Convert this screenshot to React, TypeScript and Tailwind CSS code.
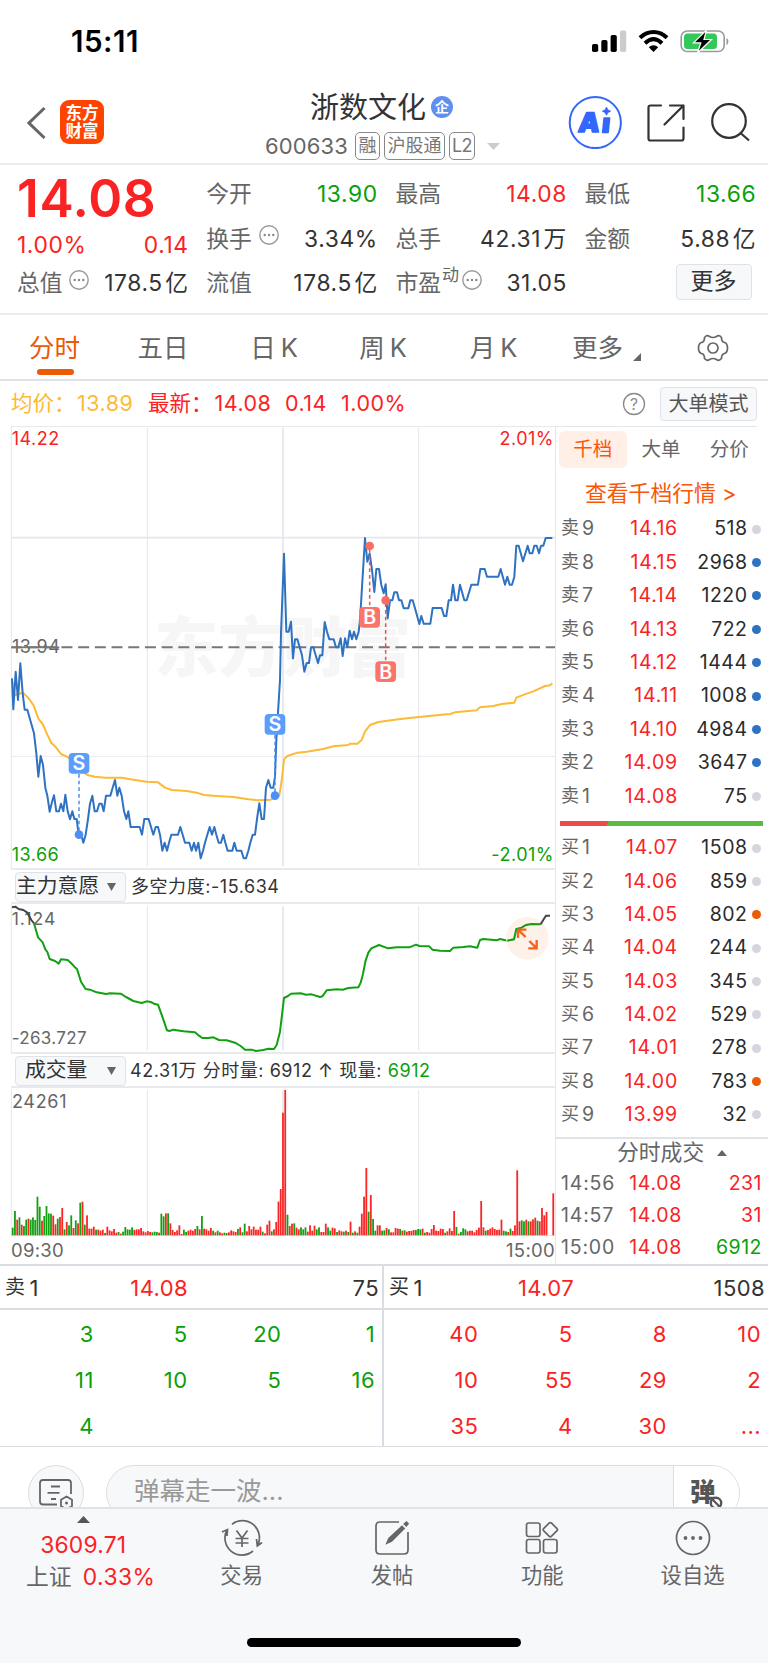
import React from "react";

const RED = "text-[#fa2323]";
const GREEN = "text-[#0aa00a]";
const DARK = "text-[#333]";

/* Chart geometry uses three units per CSS pixel. */
const pricePts =
  "36,775 40,868 47,755 54,840 61,730 68,820 74,869 82,869 102,940 109,1000 115,1070 122,1008 129,1035 136,1103 142,1127 149,1175 155,1150 162,1126 169,1174 177,1174 183,1151 190,1174 196,1124 203,1174 210,1198 217,1174 223,1197 230,1197 236,1244 244,1244 250,1268 257,1244 264,1197 270,1151 277,1127 284,1174 291,1174 298,1151 305,1151 311,1174 318,1127 331,1127 338,1103 345,1080 352,1127 358,1103 365,1127 372,1174 379,1197 385,1174 392,1221 419,1221 426,1244 433,1197 446,1197 453,1221 460,1244 467,1221 474,1221 480,1244 487,1292 494,1268 501,1292 507,1268 514,1244 534,1244 541,1221 548,1244 555,1268 568,1268 575,1292 582,1268 588,1292 595,1268 602,1315 609,1292 615,1268 622,1244 629,1221 636,1244 643,1221 649,1244 656,1268 663,1268 670,1244 676,1268 683,1292 697,1292 703,1268 710,1292 724,1292 731,1315 738,1315 745,1292 751,1268 758,1244 765,1244 771,1197 778,1150 785,1197 792,1197 798,1103 805,1080 812,1103 820,1103 825,1070 829,960 840,780 843,640 852,401 859,635 866,635 873,605 879,715 885,658 892,658 899,682 906,706 913,755 920,729 927,729 933,682 940,682 947,706 954,729 960,706 967,706 974,606 981,635 988,658 1001,658 1008,682 1015,682 1022,655 1028,708 1035,655 1042,682 1049,632 1056,658 1062,635 1069,658 1076,635 1080,600 1095,354 1102,425 1109,400 1116,450 1123,516 1129,447 1137,447 1144,495 1151,520 1157,493 1163,595 1170,541 1177,541 1183,517 1191,517 1197,541 1204,541 1211,565 1225,565 1231,541 1238,541 1245,565 1258,612 1264,588 1271,611 1291,611 1298,564 1325,564 1332,588 1339,588 1346,541 1353,541 1359,494 1366,541 1373,541 1380,494 1393,541 1400,541 1414,494 1434,494 1441,447 1454,447 1461,470 1495,470 1502,447 1515,494 1522,470 1529,494 1536,494 1543,470 1549,377 1556,377 1569,424 1583,377 1589,400 1597,400 1603,377 1610,377 1617,400 1623,377 1630,377 1637,354 1657,354";
const avgPts =
  "36,780 44,826 54,822 62,820 71,820 84,833 101,856 115,896 128,912 142,944 154,969 168,982 183,1002 205,1012 225,1030 240,1050 262,1065 285,1070 315,1073 365,1073 400,1079 440,1085 474,1087 495,1103 515,1110 560,1113 590,1118 612,1125 650,1128 700,1131 745,1138 775,1141 812,1139 838,1127 846,1075 852,1018 862,1008 892,998 920,995 970,987 1000,979 1045,975 1050,971 1072,971 1085,960 1095,935 1110,915 1135,906 1195,898 1250,892 1325,884 1350,882 1365,877 1430,871 1440,862 1480,858 1505,852 1543,848 1549,833 1580,821 1600,814 1635,798 1650,796 1657,790";
const forcePts =
  "102,190 114,232 128,247 136,268 142,276 149,297 165,303 176,311 183,298 203,300 213,309 223,320 231,327 243,365 257,387 270,389 290,397 318,402 330,400 362,401 378,411 400,423 425,429 440,424 452,426 462,431 474,434 487,470 501,511 508,513 520,509 550,514 585,517 597,527 607,534 625,534 640,532 657,540 680,541 705,548 722,558 735,569 755,569 768,573 790,570 805,566 822,567 830,555 840,515 846,465 852,414 864,408 873,401 902,400 918,404 935,403 960,411 967,409 980,391 1010,388 1028,389 1045,384 1075,382 1082,368 1089,342 1096,305 1105,278 1114,265 1137,255 1164,265 1190,262 1228,262 1248,254 1258,258 1288,259 1297,269 1320,272 1350,273 1360,263 1390,261 1410,259 1432,263 1440,240 1450,237 1490,241 1500,237 1522,242 1542,238 1549,207 1565,203 1578,195 1595,192 1622,193";
const volume =
  "g23 g73 r47 g54 r32 g28 g47 r50 g47 g54 g46 g116 g86 r44 g58 g88 g66 g65 r59 r33 g50 r55 r82 g18 r40 g30 g60 r22 g45 r36 g98 r101 g32 r60 r20 r20 r26 g17 r17 r14 r17 g7 r26 r15 r12 r19 r8 g10 r5 g11 g25 g18 g17 g24 r16 r18 r18 r22 r12 r9 r13 r10 g9 g11 g10 r8 g65 g57 r66 g66 r36 r16 r10 r15 r30 r4 g17 g10 r14 r17 r14 r19 g28 r18 g58 r20 r18 r14 r22 g14 r9 g14 r9 r6 g8 g7 r9 r15 r12 r10 g19 r24 g9 g35 r12 r28 r18 r26 r17 r17 r26 g11 r6 r32 r44 g12 r18 r40 r101 r139 r368 r436 g62 r28 r35 g36 r23 r18 g24 g18 g24 r11 r30 r14 r29 g18 g24 r10 r10 r35 g24 g14 r23 r21 g10 r15 r12 g11 r14 g10 r41 g8 r12 g8 r26 r65 r116 r202 g71 r121 g49 g14 r30 r30 g14 g15 r22 g18 r9 r9 r22 r20 g19 r14 g15 r11 r13 r13 r16 g16 g19 g18 r20 g8 r10 r8 r19 r31 r14 r13 r20 r19 g8 r12 r21 r13 r73 g25 r5 g10 g21 g18 r12 r14 r14 r9 r16 r23 r103 r24 g14 r16 r20 r24 r19 r16 r17 r47 g14 g12 r10 g20 r13 r30 r195 r42 g45 g42 r47 g42 r42 r48 r53 g44 r42 r82 r60 r70 r0 r0 r126".split(" ");

function Grid({ top, bottom }: { top: number; bottom: number }) {
  return (
    <g stroke="#e3e6ec">
      <line x1="34" x2="34" y1={top} y2={bottom} strokeWidth="3" />
      <line x1="442" x2="442" y1={top + 5} y2={bottom - 5} strokeWidth="3" />
      <line x1="849" x2="849" y1={top + 5} y2={bottom - 5} strokeWidth="5" />
      <line x1="1256" x2="1256" y1={top + 5} y2={bottom - 5} strokeWidth="3" />
    </g>
  );
}

function Marker({ x, y, kind }: { x: number; y: number; kind: "S" | "B" }) {
  return (
    <g>
      <rect x={x - 31} y={y - 31} width="62" height="62" rx="12" fill={kind === "S" ? "#5b9dfa" : "#fc7468"} />
      <text x={x} y={y + 21} textAnchor="middle" fontSize="59" fontWeight="600" fill="#fff">{kind}</text>
    </g>
  );
}

function PriceChart() {
  return (
    <svg className="block h-[442px] w-[555px] shrink-0" viewBox="0 18 1665 1326">
      <text x="462" y="752" fontSize="193" fontWeight="900" fill="#f6f6f6">东方财富</text>
      <line x1="34" x2="1665" y1="353" y2="353" stroke="#e3e8ee" strokeWidth="5" />
      <line x1="34" x2="1665" y1="1009" y2="1009" stroke="#e6eaf0" strokeWidth="3" />
      <Grid top={18} bottom={1344} />
      <line x1="34" x2="1665" y1="19" y2="19" stroke="#e3e6ea" strokeWidth="3" />
      <line x1="34" x2="1665" y1="682" y2="682" stroke="#777" strokeWidth="6" strokeDasharray="33 17.1" />
      <text x="36" y="698" fontSize="54" letterSpacing="1.5" fill="#666">13.94</text>
      <line x1="34" x2="178" y1="682" y2="682" stroke="#777" strokeWidth="5" />
      <polyline points={avgPts} fill="none" stroke="#fdba35" strokeWidth="6" strokeLinejoin="round" />
      <polyline points={pricePts} fill="none" stroke="#2f72c2" strokeWidth="6" strokeLinejoin="round" />
      <g strokeWidth="4.5" strokeDasharray="11 9">
        <line x1="237" x2="237" y1="1062" y2="1240" stroke="#4c8ff0" />
        <line x1="825" x2="825" y1="945" y2="1120" stroke="#4c8ff0" />
        <line x1="1109" x2="1109" y1="385" y2="560" stroke="#f34d45" />
        <line x1="1157" x2="1157" y1="550" y2="724" stroke="#f34d45" />
      </g>
      <circle cx="237" cy="1244" r="13" fill="#4c8ff5" />
      <circle cx="825" cy="1127" r="13" fill="#4c8ff5" />
      <circle cx="1109" cy="378" r="13" fill="#fa6b60" />
      <circle cx="1157" cy="541" r="13" fill="#fa6b60" />
      <Marker x={237} y={1030} kind="S" />
      <Marker x={825} y={913} kind="S" />
      <Marker x={1109} y={592} kind="B" />
      <Marker x={1157} y={755} kind="B" />
      <g fontSize="54" letterSpacing="1.5">
        <text x="35" y="75" fill="#fa2323">14.22</text>
        <text x="1662" y="75" textAnchor="end" fill="#fa2323">2.01%</text>
        <text x="35" y="1324" fill="#0aa00a">13.66</text>
        <text x="1662" y="1324" textAnchor="end" fill="#0aa00a">-2.01%</text>
      </g>
    </svg>
  );
}

function ForceChart() {
  return (
    <svg className="block h-[148px] w-[555px] shrink-0" viewBox="0 132 1665 444">
      <Grid top={134} bottom={576} />
      <text x="35" y="194" fontSize="53" fill="#666" letterSpacing="3">1.124</text>
      <text x="35" y="551" fontSize="51" fill="#666" letterSpacing="1">-263.727</text>
      <g fill="none" strokeWidth="6" strokeLinejoin="round">
        <polyline points="36,142 46,140 56,147 70,150 82,158 94,180 102,190" stroke="#444" />
        <polyline points={forcePts} stroke="#12a012" />
      </g>
      <circle cx="1582" cy="235" r="64" fill="#fdeee6" fillOpacity="0.85" />
      <polyline points="1522,242 1542,238 1549,207 1565,203 1578,195 1595,192 1622,193" fill="none" stroke="#12a012" strokeWidth="6" />
      <polyline points="1622,193 1631,178 1638,167 1650,167" fill="none" stroke="#444" strokeWidth="6" />
      <path d="M1554 234v-25h25M1556 211l21 20M1610 240v25h-25M1608 263l-20-20" fill="none" stroke="#f7611a" strokeWidth="7" />
    </svg>
  );
}

function VolumeChart() {
  return (
    <svg className="block h-[148px] w-[555px] shrink-0" viewBox="0 685 1665 444">
      <Grid top={687} bottom={1132} />
      <line x1="34" x2="1665" y1="1127.5" y2="1127.5" stroke="#e3e6ea" strokeWidth="3" />
      <text x="36" y="745" fontSize="54" letterSpacing="2" fill="#666">24261</text>
      {volume.map((v, i) => {
        const h = Number(v.slice(1));
        return <rect key={i} x={35.4 + i * 6.757} y={1127 - h} width="5.4" height={h} fill={v[0] === "g" ? "#12a012" : "#f92626"} />;
      })}
    </svg>
  );
}

function Dots({ className = "" }: { className?: string }) {
  return (
    <svg className={"h-5 w-5 shrink-0 " + className} viewBox="0 0 20 20">
      <circle cx="10" cy="10" r="9.2" fill="none" stroke="#999" strokeWidth="1.4" />
      <g fill="#888"><circle cx="5.7" cy="10" r="1.2" /><circle cx="10" cy="10" r="1.2" /><circle cx="14.3" cy="10" r="1.2" /></g>
    </svg>
  );
}

function Quote({ label, value, unit, color = DARK, extra }: { label: string; value: string; unit?: string; color?: string; extra?: React.ReactNode }) {
  return (
    <div className="flex h-[44.5px] items-center justify-between whitespace-nowrap">
      <div className="flex items-center text-[#666]">{label}{extra}</div>
      <div className={"-mr-[0.6px] tracking-[0.6px] " + color}>{value}{unit && <span className="ml-[2.5px]">{unit}</span>}</div>
    </div>
  );
}

const dot: Record<string, string> = { n: "bg-[#d3d6dc]", b: "bg-[#2f72c2]", o: "bg-[#eb5a05]" };

function BookRow({ side, row, className }: { side: string; row: [number, string, number, string]; className: string }) {
  return (
    <div className={"flex items-center text-[19.5px] " + className}>
      <div className="flex w-[50px] gap-[3px] text-[#666]"><span className="text-[18px]">{side}</span><span>{row[0]}</span></div>
      <div className={"w-[67px] text-right tracking-[0.8px] " + RED}>{row[1]}</div>
      <div className="w-[69.5px] text-right tracking-[0.5px] text-[#2b2b2b]">{row[2]}</div>
      <div className={"ml-[4px] h-[9px] w-[9px] rounded-full " + dot[row[3]]} />
    </div>
  );
}

const sells: [number, string, number, string][] = [
  [9, "14.16", 518, "n"], [8, "14.15", 2968, "b"], [7, "14.14", 1220, "b"], [6, "14.13", 722, "b"], [5, "14.12", 1444, "b"],
  [4, "14.11", 1008, "b"], [3, "14.10", 4984, "b"], [2, "14.09", 3647, "b"], [1, "14.08", 75, "n"],
];
const buys: [number, string, number, string][] = [
  [1, "14.07", 1508, "n"], [2, "14.06", 859, "n"], [3, "14.05", 802, "o"], [4, "14.04", 244, "n"], [5, "14.03", 345, "n"],
  [6, "14.02", 529, "n"], [7, "14.01", 278, "n"], [8, "14.00", 783, "o"], [9, "13.99", 32, "n"],
];

function OrderBook() {
  return (
    <div className="flex w-[213px] shrink-0 flex-col border-l border-[#e3e6ea]">
      <div className="mr-[11px] border-t border-[#e3e6ea]" />
      <div className="ml-[2.5px] mr-[4.5px] mt-[3.500px] grid h-[37px] grid-cols-3 text-center text-[19.5px] leading-[37px] text-[#666]">
        <div className="rounded-[6px] bg-[#ffefe7] text-[#fb5607]">千档</div>
        <div>大单</div>
        <div>分价</div>
      </div>
      <div className="h-[45px] pl-[29px] text-[21.8px] leading-[50px] text-[#fb5607]">查看千档行情 &gt;</div>
      <div className="pl-[5px]">
        {sells.map((r) => <BookRow key={r[0]} side="卖" row={r} className="h-[33.4px]" />)}
      </div>
      <svg className="ml-[4px] mt-[8px] block h-[5px] w-[203px] shrink-0" viewBox="0 0 203 5">
        <path d="M0 0H203V5H0z" fill="#5bbb43" />
        <path d="M0 0H49L46 5H0z" fill="#ef4a4a" />
      </svg>
      <div className="mt-auto pl-[5px]">
        {buys.map((r) => <BookRow key={r[0]} side="买" row={r} className="h-[33.33px]" />)}
      </div>
      <div className="mt-[5px] flex h-[31px] shrink-0 items-center border-t-2 border-[#e0e3e8] pl-[61px] text-[21.8px] text-[#666]">
        分时成交
        <svg className="ml-[13px] h-[6px] w-[10px]" viewBox="0 0 10 6"><path d="M0 6L5 0L10 6z" fill="#666" /></svg>
      </div>
      {[["14:56", "231", RED], ["14:57", "31", RED], ["15:00", "6912", GREEN]].map(([t, v, c]) => (
        <div key={t} className="flex h-8 shrink-0 items-center pl-[5px] pt-px text-[19.5px]">
          <div className="w-[62px] tracking-[0.8px] text-[#666]">{t}</div>
          <div className={"w-[59px] text-right tracking-[0.7px] " + RED}>{"14.08"}</div>
          <div className={"w-[80px] text-right tracking-[0.5px] " + c}>{v}</div>
        </div>
      ))}
      <div className="h-[0.500px] shrink-0" />
    </div>
  );
}

function Select({ label, className }: { label: string; className: string }) {
  return (
    <div className={"flex h-[30px] w-[111px] shrink-0 items-center rounded-[4px] border border-[#dfe2e8] bg-[#f6f8fa] text-[20.8px] tracking-normal text-[#333] " + className}>
      <span>{label}</span>
      <svg className="ml-auto mr-[9px] h-[8px] w-[9px]" viewBox="0 0 9 8"><path d="M0 0H9L4.500 8z" fill="#666" /></svg>
    </div>
  );
}

function Detail({ side, price, total, cells, color, className }: { side: string; price: string; total: string; cells: string[]; color: string; className: string }) {
  return (
    <div className={className}>
      <div className="relative flex h-[44px] items-center justify-between border-b-2 border-[#dadde3] pl-[5px] pr-[3px] pt-px text-[22px] tracking-[0.4px] text-[#333]">
        <div className="flex gap-[4px]"><span className="text-[20px]">{side}</span><span>1</span></div>
        <div className="absolute right-[194px] text-[#fa2323]">{price}</div>
        <div>{total}</div>
      </div>
      <div className={"grid h-[137px] grid-cols-4 content-start pr-[7px] pt-px text-right text-[22px] leading-[46px] tracking-[0.4px] " + color}>
        {cells.map((c, i) => <div key={i}>{c}</div>)}
      </div>
    </div>
  );
}

function NavItem({ label, children }: { label: string; children: React.ReactNode }) {
  return (
    <div className="flex w-[150.3px] flex-col items-center">
      <svg className="mt-[8px] h-[42px] w-[42px]" viewBox="0 0 42 42" fill="none" stroke="#666" strokeWidth="1.7">{children}</svg>
      <div className="mt-[1px] h-[31px] text-[21.3px] leading-[31px] text-[#666]">{label}</div>
    </div>
  );
}

export default function App() {
  return (
    <div className="flex h-[1663px] w-[768px] flex-col overflow-hidden bg-white font-['Inter','Noto_Sans_CJK_SC',sans-serif] leading-none">
      {/* status bar */}
      <div className="flex h-[84px] shrink-0 items-center pl-[71px] pr-[38px]">
        <div className="text-[29.500px] font-semibold tracking-[0.5px] text-black">15:11</div>
        <svg className="ml-auto h-[24px] w-[138px]" viewBox="0 0 138 24">
          <rect x="0" y="14" width="6.200" height="8" rx="1.800" />
          <rect x="9.300" y="10" width="6.200" height="12" rx="1.800" />
          <rect x="18.600" y="5" width="6.200" height="17" rx="1.800" />
          <rect x="28" y="0.500" width="6.200" height="21.500" rx="1.800" fill="#ccc" />
          <g fill="none" stroke="#000" strokeWidth="4">
            <path d="M48 7.800C56 .2 67 .2 75 7.800" />
            <path d="M53 13.200C58.500 8 64.500 8 70 13.200" />
          </g>
          <path d="M56.800 17.200C59.500 14.500 63.500 14.500 66.200 17.200L61.500 22z" />
          <rect x="89.200" y="1" width="43" height="20.500" rx="6" fill="none" stroke="#999" strokeWidth="1.600" />
          <rect x="92" y="3.500" width="33" height="15.500" rx="3.500" fill="#34c759" />
          <path d="M134.500 8c2.500 1 2.500 6 0 7z" fill="#999" />
          <path d="M114.500 0L101.500 12.800H108.800L105.500 23L119.500 9.500H112z" stroke="#fff" strokeWidth="1.200" />
        </svg>
      </div>

      {/* title bar */}
      <div className="flex h-[81px] shrink-0 items-start border-b-2 border-[#ededef]">
        <svg className="ml-[27px] mt-[22px] h-[34px] w-[19px]" viewBox="0 0 19 34"><path d="M17.500 2L2 17L17.500 32" fill="none" stroke="#666" strokeWidth="3" /></svg>
        <div className="ml-[14px] mt-[16px] flex h-[44px] w-[44px] flex-col items-center justify-center rounded-[9px] bg-[#ff4400] text-[16.5px] font-bold leading-[18.5px] text-white">
          <span>东方</span><span>财富</span>
        </div>
        <div className="ml-[161px] w-[240px]">
          <div className="mt-[6px] flex h-[34px] items-center pl-[45px] text-[29px] text-[#333]">
            浙数文化
            <div className="ml-[5px] flex h-[22px] w-[22px] items-center justify-center rounded-full bg-[#5f90ee] text-[14px] font-bold text-white">企</div>
          </div>
          <div className="mt-[8px] flex h-7 items-center text-[18px] text-[#777]">
            <span className="w-[90px] text-[22px] tracking-[0.1px] text-[#666]">600633</span>
            <span className="mr-1 flex h-7 w-[25px] items-center justify-center rounded-[5px] border border-[#888]">融</span>
            <span className="mr-1 flex h-7 w-[61px] items-center justify-center rounded-[5px] border border-[#888]">沪股通</span>
            <span className="flex h-7 w-[26px] items-center justify-center rounded-[5px] border border-[#888] tracking-[-0.5px]">L2</span>
            <svg className="ml-[12px] h-[7px] w-[13px] shrink-0" viewBox="0 0 13 7"><path d="M0 0H13L6.500 7z" fill="#ccc" /></svg>
          </div>
        </div>
        <svg className="ml-[63px] mt-[11px] h-[54px] w-[54px]" viewBox="0 0 54 54">
          <circle cx="27.300" cy="27.500" r="25.600" fill="none" stroke="#3366fb" strokeWidth="2" />
          <g transform="skewX(-6)" fill="#3366fb" stroke="#3366fb" strokeWidth="1.500" strokeLinejoin="round">
            <text x="13.500" y="37.500" fontSize="27" fontWeight="900">A</text>
            <rect x="38.500" y="23" width="5.600" height="14.500" />
          </g>
          <path d="M38.500 12.200l1.300 2.700 2.700 1.300-2.700 1.300-1.300 2.700-1.300-2.700-2.700-1.300 2.700-1.300z" fill="#3366fb" stroke="#3366fb" />
        </svg>
        <svg className="ml-[23.500px] mt-[18px] h-[40px] w-[40px]" viewBox="0 0 40 40" fill="none" stroke="#333" strokeWidth="2.200" strokeLinecap="round" strokeLinejoin="round">
          <path d="M15 3.500H4.500Q2.500 3.500 2.500 5.500V36.500Q2.500 38.500 4.500 38.500H35.500Q37.500 38.500 37.500 36.500V25.500" />
          <path d="M24 3.500H37.500V17M37.500 3.500L18.500 22.500" />
        </svg>
        <svg className="ml-[25.500px] mt-[18px] h-[42px] w-[40px]" viewBox="0 0 40 42" fill="none" stroke="#333" strokeWidth="2.200">
          <circle cx="18" cy="19" r="16.800" /><path d="M29.500 31L38 38.500" />
        </svg>
      </div>

      {/* quote summary */}
      <div className="flex h-[150px] shrink-0 gap-[18.200px] border-b-2 border-[#ededef] pl-[17px] pt-[7.500px] text-[22.800px]">
        <div className="flex w-[171px] flex-col">
          <div className={"h-[51px] text-[51.500px] font-semibold leading-[51px] tracking-[0.600px] " + RED}>14.08</div>
          <div className={"-mr-[0.600px] mt-[6px] flex h-[32px] items-center justify-between text-[22.800px] tracking-[0.600px] " + RED}><span>1.00%</span><span>0.14</span></div>
          <div><Quote label="总值" value="178.5" unit="亿" extra={<Dots className="-mt-2 ml-[6px]" />} /></div>
        </div>
        <div className="w-[171px]">
          <Quote label="今开" value="13.90" color={GREEN} />
          <Quote label="换手" value="3.34%" extra={<Dots className="-mt-2 ml-[7px]" />} />
          <Quote label="流值" value="178.5" unit="亿" />
        </div>
        <div className="w-[171px]">
          <Quote label="最高" value="14.08" color={RED} />
          <Quote label="总手" value="42.31" unit="万" />
          <Quote label="市盈" value="31.05" extra={<><span className="-mt-4 ml-[1px] text-[17px]">动</span><Dots className="-mt-2 ml-[3px]" /></>} />
        </div>
        <div className="w-[171px]">
          <Quote label="最低" value="13.66" color={GREEN} />
          <Quote label="金额" value="5.88" unit="亿" />
          <div className="ml-auto mr-[4px] mt-[2px] flex h-9 w-[76px] items-center justify-center rounded-[4px] border border-[#dfe2e8] bg-[#f6f8fa] text-[23px] text-[#333]">更多</div>
        </div>
      </div>

      {/* period tabs */}
      <div className="flex h-[66px] shrink-0 items-center border-b-2 border-[#dfe2e8] pt-px text-[25.500px] text-[#666]">
        <div className="relative w-[109px] text-center text-[#eb5a05]">
          分时
          <div className="absolute -bottom-[15px] left-[37px] h-[6px] w-[37px] rounded-full bg-[#eb5a05]" />
        </div>
        <div className="w-[108px] text-center">五日</div>
        <div className="w-[114px] text-center">日<span className="ml-[5px]">K</span></div>
        <div className="w-[104px] text-center">周<span className="ml-[5px]">K</span></div>
        <div className="w-[117px] text-center">月<span className="ml-[5px]">K</span></div>
        <div className="ml-[20px] flex items-end">
          更多
          <svg className="mb-[-1px] ml-[10px] h-[8px] w-[8px]" viewBox="0 0 8 8"><path d="M8 0V8H0z" fill="#666" /></svg>
        </div>
        <svg className="ml-[56px] h-[30px] w-[32px]" viewBox="0 0 32 30" fill="none" stroke="#666" strokeWidth="1.700" strokeLinejoin="round">
          <path d="M12.500 3.500Q16 5.500 19.500 3.500Q22 1.500 24.500 4.500Q24.500 9 27.500 9.500Q30.500 10.500 30.500 15Q30.500 19.500 27.500 20.500Q24.500 21 24.500 25.500Q22 28.500 19.500 26.500Q16 24.500 12.500 26.500Q10 28.500 7.500 25.500Q7.500 21 4.500 20.500Q1.500 19.500 1.500 15Q1.500 10.500 4.500 9.500Q7.500 9 7.500 4.500Q10 1.500 12.500 3.500z" />
          <circle cx="16" cy="15" r="5" />
        </svg>
      </div>

      {/* average and last price */}
      <div className="flex h-[45px] shrink-0 items-center text-[21.500px]">
        <div className="flex w-[137px] pl-[11px] text-[#fdba35]"><span className="w-[66px] whitespace-nowrap">均价：</span><span className="tracking-[0.500px]">13.89</span></div>
        <div className={"flex pl-[11px] tracking-[0.500px] " + RED}><span className="w-[66.500px] whitespace-nowrap tracking-normal">最新：</span><span className="w-[70.500px]">14.08</span><span className="w-[56px]">0.14</span><span>1.00%</span></div>
        <svg className="ml-auto h-6 w-6" viewBox="0 0 24 24"><circle cx="12" cy="12" r="10.500" fill="none" stroke="#888" strokeWidth="1.300" /><text x="12" y="17.500" textAnchor="middle" fontSize="15.500" fill="#888">?</text></svg>
        <div className="ml-[14px] mr-[11px] flex h-[34px] w-[97px] items-center justify-center rounded-[4px] border border-[#dfe2e8] bg-[#f6f8fa] text-[20px] text-[#555]">大单模式</div>
      </div>

      {/* charts and order book */}
      <div className="flex h-[838px] shrink-0">
        <div className="flex w-[555px] shrink-0 flex-col">
          <PriceChart />
          <div className="ml-[11px] flex h-9 shrink-0 items-center border-y-2 border-[#e8eaee] pl-[4px] pt-px text-[18px] tracking-[0.550px] text-[#333]">
            <Select label="主力意愿" className="whitespace-nowrap" />
            <span className="ml-[5px]">多空力度:-15.634</span>
          </div>
          <ForceChart />
          <div className="ml-[11px] flex h-9 shrink-0 items-center border-y-2 border-[#e8eaee] pl-[4px] pt-px text-[18px] tracking-[0.550px] text-[#333]">
            <Select label="成交量" className="pl-[9px]" />
            <span className="ml-[4px] whitespace-pre">42.31万 分时量: 6912 ↑ 现量: <span className={GREEN}>6912</span></span>
          </div>
          <VolumeChart />
          <div className="flex h-7 items-center justify-between pl-[11px] text-[18.500px] tracking-[0.300px] text-[#666]"><span>09:30</span><span>15:00</span></div>
        </div>
        <OrderBook />
      </div>

      {/* level-two queue */}
      <div className="flex h-[183px] shrink-0 border-b border-t-2 border-[#dadde3]">
        <Detail side="卖" price="14.08" total="75" cells={["3", "5", "20", "1", "11", "10", "5", "16", "4"]} color={GREEN} className="w-[384px] border-r-2 border-[#dadde3]" />
        <Detail side="买" price="14.07" total="1508" cells={["40", "5", "8", "10", "10", "55", "29", "2", "35", "4", "30", "..."]} color={RED} className="w-[384px]" />
      </div>

      {/* comment bar */}
      <div className="flex h-[60px] shrink-0 items-start overflow-hidden pl-[28px] pt-[18px]">
        <div className="flex h-[56px] w-[56px] items-start justify-center rounded-full border border-[#dadde3] bg-[#f6f8fa] pt-[12px]">
          <svg className="h-[34px] w-[36px]" viewBox="0 0 36 34" fill="none" stroke="#666" strokeWidth="1.800">
            <path d="M33 16V5Q33 2 30 2H5Q2 2 2 5V23.500Q2 26.500 5 26.500H19" />
            <path d="M13 8.500h9M9.500 14.800h12M13 21h5" />
            <path d="M28.500 18.500l5.500 3.200v6.400l-5.500 3.200-5.500-3.200v-6.400z" /><circle cx="28.500" cy="25" r="1.500" fill="#666" stroke="none" />
          </svg>
        </div>
        <div className="ml-[22px] flex h-[56px] w-[634px] overflow-hidden rounded-full border border-[#dadde3] bg-[#f6f8fa]">
          <div className="w-[566px] pl-[27px] pt-[12px] text-[25.500px] text-[#999]">弹幕走一波...</div>
          <div className="relative flex-1 border-l border-[#dadde3] bg-white pl-[16px] pt-[13px] text-[25.500px] font-black text-[#555]">
            弹
            <svg className="absolute left-[35px] top-[30px] h-[14px] w-[14px]" viewBox="0 0 14 14"><circle cx="7" cy="7" r="5.200" fill="#fff" stroke="#555" strokeWidth="2.400" /><path d="M3.500 3.500l7 7" stroke="#555" strokeWidth="2.200" /></svg>
          </div>
        </div>
      </div>

      {/* bottom navigation */}
      <div className="flex flex-1 flex-col border-t-2 border-[#dfe2e6] bg-[#f6f8fa]">
        <div className="flex">
          <div className="flex w-[166.500px] flex-col items-center">
            <svg className="mt-[7px] h-[7px] w-[13px]" viewBox="0 0 13 7"><path d="M0 7L6.500 0L13 7z" fill="#555" /></svg>
            <div className={"h-[42px] text-[22.800px] leading-[43px] tracking-[0.200px] " + RED}>3609.71</div>
            <div className="-mt-[4px] flex h-[32px] items-center gap-[11px] pl-[15px] text-[22.800px] text-[#666]"><span>上证</span><span className={"tracking-[0.500px] " + RED}>0.33%</span></div>
          </div>
          <NavItem label="交易">
            <path d="M11 6.800A17 17 0 0 1 36.800 27.500M32 33.500A17 17 0 0 1 6 12.500M1 14.500L6.500 12L6 18.500M41 25L36.300 28.500L35.500 21.500" transform="translate(0 .5)" />
            <path d="M15.500 13.500L21 21L26.500 13.500M21 21V30M14.500 21.500H27.500M14.500 26H27.500" />
          </NavItem>
          <NavItem label="发帖">
            <path d="M28 5H9Q5 5 5 9V33Q5 37 9 37H33Q37 37 37 33V15" />
            <path d="M16 26l2-4.500L31 9.500l2 2L20.500 24zM33.500 7l2-1.800 1.500 1.500-1.800 2z" fill="#666" />
          </NavItem>
          <NavItem label="功能">
            <rect x="5.500" y="6" width="13.500" height="13.500" rx="2.200" /><rect x="5.500" y="22.500" width="13.500" height="13.500" rx="2.200" /><rect x="22.500" y="22.500" width="13.500" height="13.500" rx="2.200" />
            <rect x="23.800" y="7.200" width="11" height="11" rx="1.800" transform="rotate(45 29.300 12.700)" />
          </NavItem>
          <NavItem label="设自选">
            <circle cx="21" cy="21" r="16.500" />
            <g fill="#666" stroke="none"><circle cx="13.500" cy="21" r="1.900" /><circle cx="21" cy="21" r="1.900" /><circle cx="28.500" cy="21" r="1.900" /></g>
          </NavItem>
        </div>
        <div className="mx-auto mb-[16px] mt-auto h-[9px] w-[274px] rounded-full bg-black" />
      </div>
    </div>
  );
}
